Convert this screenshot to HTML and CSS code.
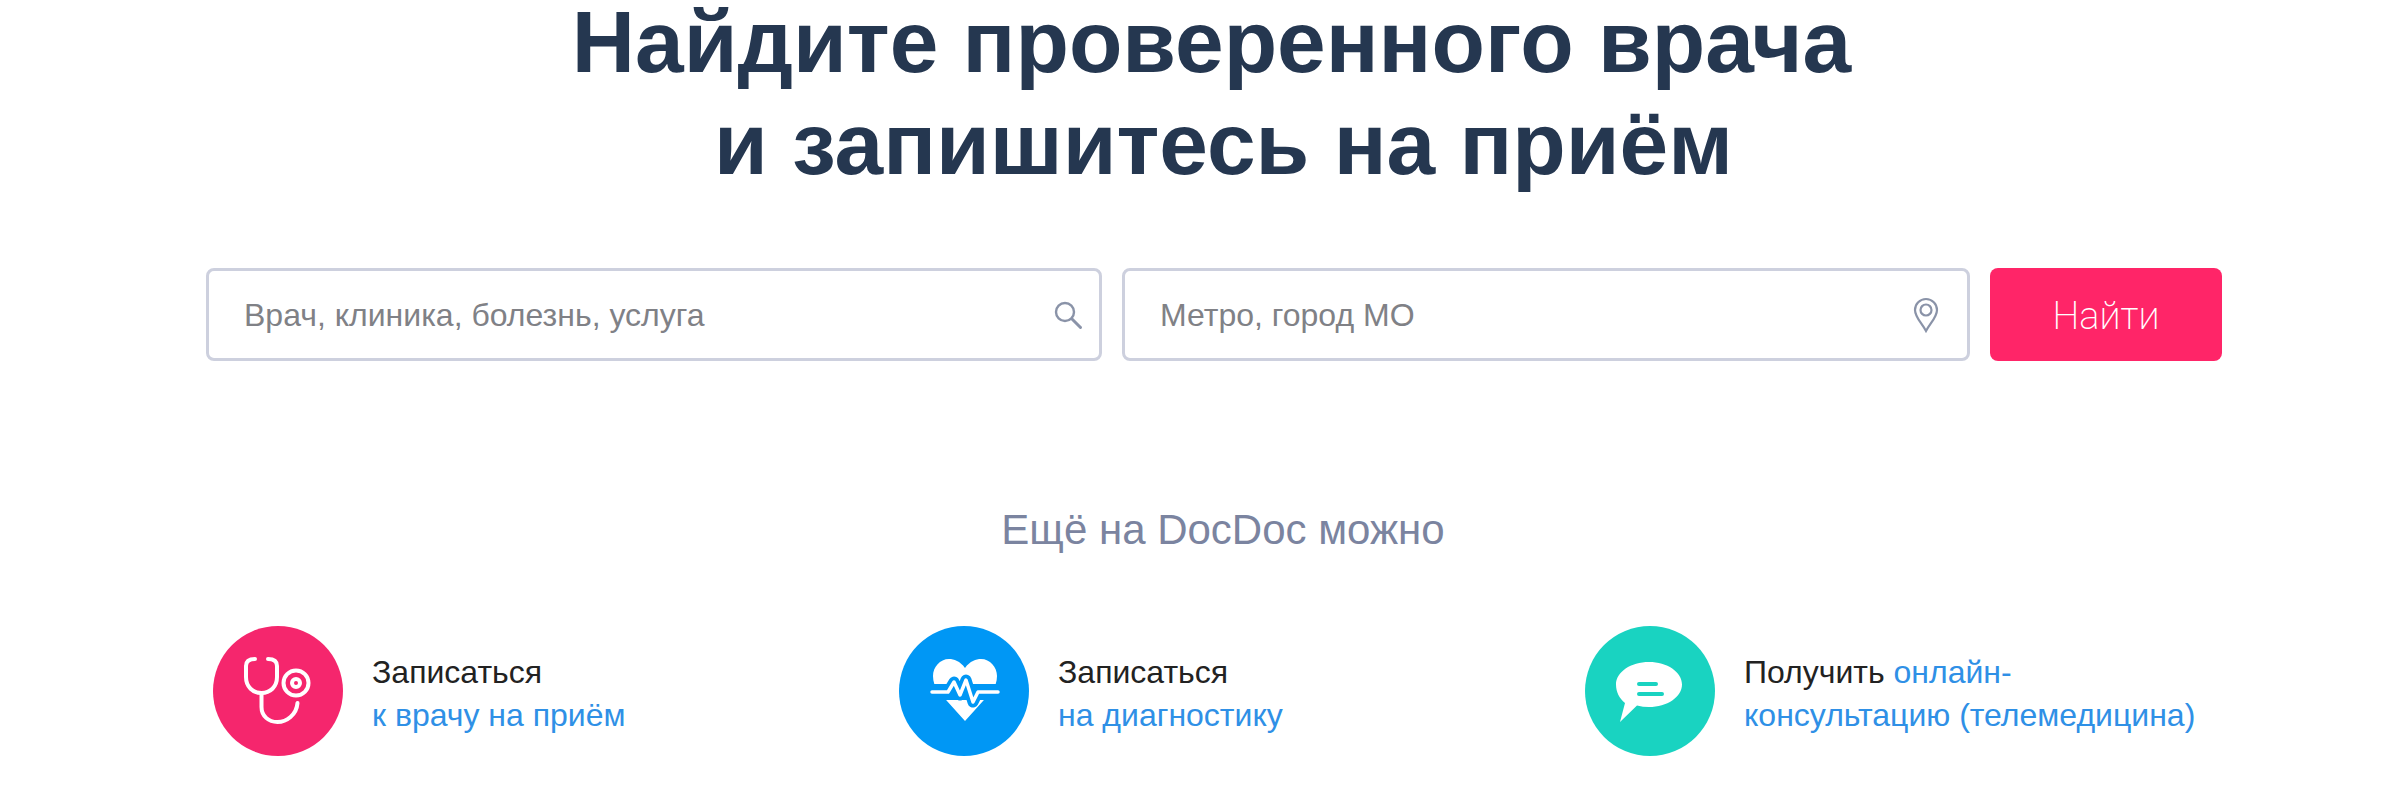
FILE: index.html
```html
<!DOCTYPE html>
<html lang="ru">
<head>
    <meta charset="UTF-8">
    <meta name="viewport" content="width=device-width, initial-scale=1.0">
    <title>Поиск врача</title>
    <link rel="stylesheet" href="styles.css">
</head>
<body>
<div class="page">
    <h1 class="title">Найдите проверенного врача<span class="title-second">и запишитесь на приём</span></h1>

    <form class="search">
        <div class="field field-query">
            <span class="field-text">Врач, клиника, болезнь, услуга</span>
            <svg class="field-icon" width="30" height="30" viewBox="0 0 30 30">
                <circle cx="12" cy="12" r="9" fill="none" stroke="#8a93a8" stroke-width="2.4"/>
                <path d="M19 19l8.5 8.5" fill="none" stroke="#8a93a8" stroke-width="3" stroke-linecap="round"/>
            </svg>
        </div>
        <div class="field field-place">
            <span class="field-text">Метро, город МО</span>
            <svg class="field-icon" width="26" height="36" viewBox="0 0 26 36">
                <path d="M13 34C8 25 2 20 2 13a11 11 0 0 1 22 0c0 7-6 12-11 21z" fill="none" stroke="#8a93a8" stroke-width="2.2"/>
                <circle cx="13" cy="13" r="5.5" fill="none" stroke="#8a93a8" stroke-width="2.2"/>
            </svg>
        </div>
        <button class="search-btn" type="button">Найти</button>
    </form>

    <h2 class="more-title">Ещё на DocDoc можно</h2>

    <div class="more-list">
        <div class="more-item">
            <div class="more-icon icon-pink">
                <svg width="130" height="130" viewBox="0 0 130 130" fill="none" stroke="#fff" stroke-width="4" stroke-linecap="round">
                    <path d="M42 33c-5 0-9 2-9 7v11c0 10 7 16 15.500 16S64 61 64 51V40c0-5-4-7-9-7"/>
                    <path d="M48.500 67v14c0 9 7 15 16 15s19-7 20-19"/>
                    <circle cx="83" cy="57" r="12.500"/>
                    <circle cx="83" cy="57" r="4"/>
                </svg>
            </div>
            <div class="more-text">Записаться<br><a href="#">к врачу на приём</a></div>
        </div>
        <div class="more-item">
            <div class="more-icon icon-blue">
                <svg width="130" height="130" viewBox="0 0 130 130" fill="none">
                    <path d="M66 42C61 35 55 33 50 33c-9 0-16 8-16 17 0 6 2 11 5 15l27 30 27-30c3-4 5-9 5-15 0-9-7-17-16-17-5 0-11 2-16 9z" fill="#fff"/>
                    <path d="M28 66h76" stroke="#0097f5" stroke-width="16"/>
                    <path d="M49 66l6-10 6 13 6-15 7 22 5-10" stroke="#0097f5" stroke-width="11" stroke-linejoin="round"/>
                    <path d="M33 66h16l6-10 6 13 6-15 7 22 5-10h20" stroke="#fff" stroke-width="3.500" stroke-linecap="round" stroke-linejoin="round"/>
                </svg>
            </div>
            <div class="more-text">Записаться<br><a href="#">на диагностику</a></div>
        </div>
        <div class="more-item">
            <div class="more-icon icon-green">
                <svg width="130" height="130" viewBox="0 0 130 130">
                    <path d="M64 36c18.200 0 33 10 33 22.500S82.200 81 64 81c-4 0-8-.5-12-1.500L35 96l5-19C34.500 72.500 31 66 31 58.500 31 46 45.800 36 64 36z" fill="#fff"/>
                    <path d="M54 58h17M54 68h23" stroke="#19d3c1" stroke-width="4" stroke-linecap="round"/>
                </svg>
            </div>
            <div class="more-text">Получить <a href="#">онлайн-<br>консультацию (телемедицина)</a></div>
        </div>
    </div>
</div>
</body>
</html>
```

FILE: styles.css
```css
body {
    margin: 0;
    background: #fff;
    font-family: "Liberation Sans", Arial, sans-serif;
    overflow: hidden;
}
.page {
    width: 2016px;
    margin-left: 206px;
}
.title {
    margin: -9px 0 0;
    padding-right: 5px;
    text-align: center;
    color: #253750;
    font-size: 87.5px;
    line-height: 102px;
    font-weight: bold;
}
.title-second {
    display: block;
    padding-left: 24px;
}

/* поиск */
.search {
    display: flex;
    gap: 20px;
    margin-top: 73px;
    height: 93px;
}
.field {
    box-sizing: border-box;
    display: flex;
    align-items: center;
    justify-content: space-between;
    padding: 0 16px 0 35px;
    border: 3px solid #cdd0de;
    border-radius: 8px;
    background: #fff;
}
.field-query {
    width: 896px;
}
.field-place {
    width: 848px;
}
.field-text {
    padding-top: 2px;
    color: #808186;
    font-size: 32px;
}
.field-place .field-icon {
    margin-right: 12px;
}
.search-btn {
    width: 232px;
    padding-top: 3px;
    border: none;
    border-radius: 8px;
    background: #ff2568;
    color: #fff;
    font-family: Roboto, sans-serif;
    font-weight: 200;
    font-size: 38px;
    cursor: pointer;
}

/* ещё на сайте */
.more-title {
    margin: 146px 0 0;
    padding-left: 18px;
    text-align: center;
    color: #7b84a0;
    font-size: 42px;
    line-height: 46px;
    font-weight: normal;
}
.more-list {
    display: grid;
    grid-template-columns: repeat(3, 686px);
    margin: 73px 0 0 7px;
}
.more-item {
    display: flex;
    align-items: center;
    gap: 29px;
}
.more-icon {
    width: 130px;
    height: 130px;
    border-radius: 50%;
    flex-shrink: 0;
}
.icon-pink {
    background: #f5266d;
}
.icon-blue {
    background: #0097f5;
}
.icon-green {
    background: #19d3c1;
}
.more-text {
    padding-top: 5px;
    color: #222;
    font-size: 32px;
    line-height: 43px;
}
.more-text a {
    color: #2f90e6;
    text-decoration: none;
}
```
